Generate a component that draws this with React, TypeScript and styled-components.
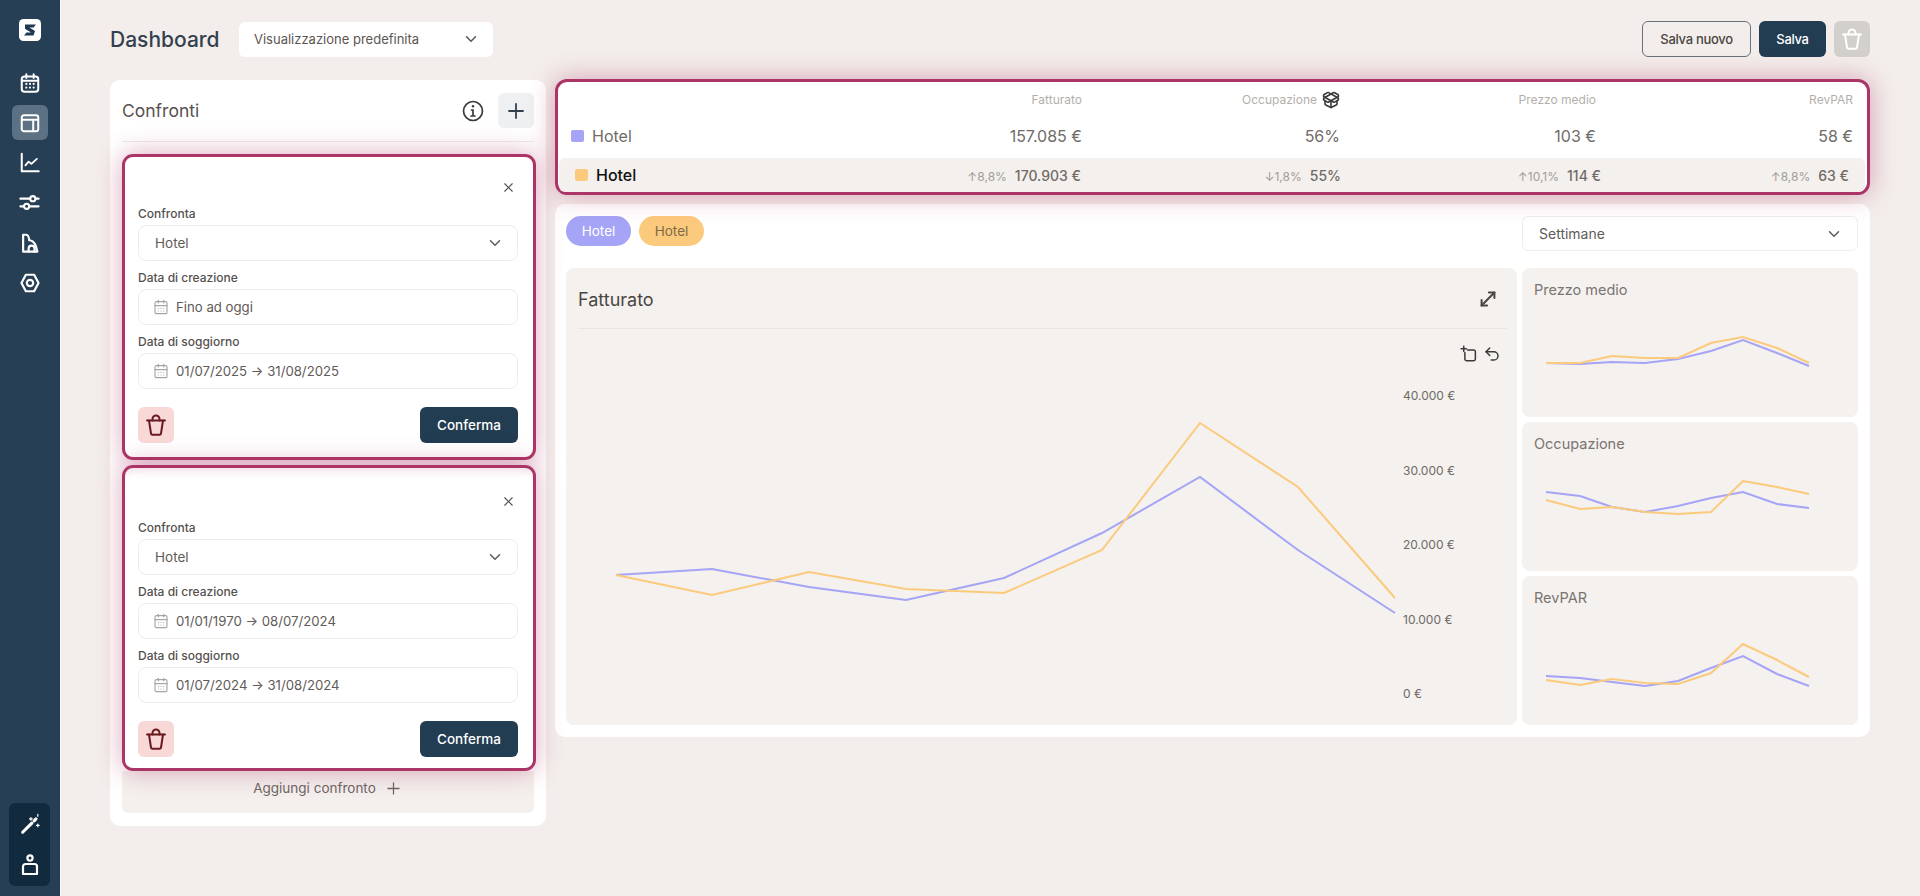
import React from "react"
import styled, { createGlobalStyle } from "styled-components"
import { CalendarDays, ChevronDown, MoveDiagonal, PackageOpen, Plus, Undo2, X } from "lucide-react"

const PURPLE = "#a5a4f6"
const YELLOW = "#fcca7d"
const NAVY = "#223c52"

const GlobalStyle = createGlobalStyle`
    html, body {
        margin: 0;
        height: 100%;
        background: #f3eeeb;
        font-family: Inter, "Liberation Sans", sans-serif;
        color: #4a4643;
    }
    * { box-sizing: border-box; }
`

/* ---------- icons ---------- */

const NavCalendar = () => (
    <svg width="22" height="22" viewBox="0 0 24 24" fill="none" stroke="currentColor" strokeWidth="2.2" strokeLinecap="round">
        <rect x="3" y="5" width="18" height="16.5" rx="3" />
        <path d="M8 2.5v4M16 2.5v4M3.5 9.5h17" />
        <path d="M8 13h.01M12 13h.01M16 13h.01M8 17h.01M12 17h.01M16 17h.01" strokeWidth="2.4" />
    </svg>
)

const NavLayout = () => (
    <svg width="22" height="22" viewBox="0 0 24 24" fill="none" stroke="currentColor" strokeWidth="2.2" strokeLinejoin="round">
        <rect x="3" y="3.5" width="18" height="17.5" rx="2.5" />
        <path d="M3 8.5h18M15.5 8.5V21" />
    </svg>
)

const NavChart = () => (
    <svg width="22" height="22" viewBox="0 0 24 24" fill="none" stroke="currentColor" strokeWidth="2.2" strokeLinecap="round" strokeLinejoin="round">
        <path d="M3 2v19h18.5" />
        <path d="M7 14.5l3.5-4 3 2.5 6-5.5" strokeWidth="2" />
    </svg>
)

const NavSliders = () => (
    <svg width="23" height="23" viewBox="0 0 24 24" fill="none" stroke="currentColor" strokeWidth="2.2" strokeLinecap="round">
        <path d="M2.5 8h10M18.5 8h3M2.5 16h3.5M12 16h9.5" />
        <circle cx="15.5" cy="8" r="2.7" />
        <circle cx="9" cy="16" r="2.7" />
    </svg>
)

const NavBuilding = () => (
    <svg width="22" height="22" viewBox="0 0 24 24" fill="none" stroke="currentColor" strokeWidth="2.4" strokeLinecap="round" strokeLinejoin="round">
        <path d="M4.5 21.5V3H8c2.2 0 2.8 3 3.2 6 3.3.2 5 2 6.3 4.5 1.2 2.4 2 5 2.5 8z" />
        <path d="M10.5 21.5V18a3.2 3.2 0 0 1 6.4 0v3.5" />
    </svg>
)

const NavGear = () => (
    <svg width="22" height="22" viewBox="0 0 24 24" fill="none" stroke="currentColor" strokeWidth="2.4" strokeLinejoin="round">
        <path d="M7.5 3h9l4.8 9-4.8 9h-9L2.700 12z" />
        <circle cx="12" cy="12" r="3.5" />
    </svg>
)

const NavWand = () => (
    <svg width="22" height="22" viewBox="0 0 24 24" fill="none" stroke="currentColor" strokeLinecap="round">
        <path d="M4 21L14 11" strokeWidth="3.4" />
        <path d="M16.5 8.5L18.5 6.5" strokeWidth="3.4" />
        <path d="M13 5v3M11.5 6.5h3M20.5 12v3M19 13.5h3M20.5 1.5v2" strokeWidth="1.3" />
    </svg>
)

const NavUser = () => (
    <svg width="24" height="24" viewBox="0 0 24 24" fill="none" stroke="currentColor" strokeWidth="2.2" strokeLinejoin="round">
        <circle cx="12" cy="5" r="2.6" />
        <path d="M7.5 11h9a2.5 2.5 0 0 1 2.5 2.5V21H5v-7.5A2.5 2.5 0 0 1 7.5 11z" />
    </svg>
)

const InfoIcon = () => (
    <svg width="24" height="24" viewBox="0 0 24 24" fill="none" stroke="#3c3a38" strokeWidth="1.7" strokeLinecap="round">
        <circle cx="12" cy="12" r="9.5" />
        <path d="M10.5 11H12v6M10 17h4" />
        <path d="M12 7.3h.01" strokeWidth="2.4" />
    </svg>
)

const TrashIcon = ({ size = 24 }: { size?: number }) => (
    <svg width={size} height={size} viewBox="0 0 24 24" fill="none" stroke="currentColor" strokeWidth="2" strokeLinecap="round" strokeLinejoin="round">
        <path d="M3 7.5h18" />
        <path d="M8.5 7.5V6a3.5 3.5 0 0 1 7 0v1.5" />
        <path d="M5 7.5l2 13a1.5 1.5 0 0 0 1.5 1.300h7a1.500 1.500 0 0 0 1.500-1.300l2-13" />
    </svg>
)

const CropIcon = () => (
    <svg width="18" height="18" viewBox="0 0 24 24" fill="none" stroke="currentColor" strokeWidth="2" strokeLinecap="round" strokeLinejoin="round">
        <path d="M10 6.5h8a2.5 2.5 0 0 1 2.5 2.5v9.500a2.500 2.500 0 0 1-2.500 2.500H9a2.500 2.500 0 0 1-2.500-2.500V10" />
        <path d="M5 1.5v7M1.5 5h7" />
    </svg>
)

const LogoMark = () => (
    <svg width="22" height="22" viewBox="0 0 22 22">
        <rect width="22" height="22" rx="4.5" fill="#ffffff" />
        <path d="M6 5.5h11l-2.500 3H10.500l5.500 3.500-1.500 4.500H5l2.500-3h4.500L6 9.800z" fill="#1e3a52" />
    </svg>
)

/* ---------- chart data, read from the picture ---------- */

const BIG_X = [50, 146, 243, 340, 438, 536, 634, 732, 829]
const BIG_PURPLE = [189, 183, 201, 214, 192, 147, 91, 164, 227]
const BIG_YELLOW = [189, 209, 186, 203, 207, 164, 37, 101, 212]

const MINI_X = [24, 58, 90, 123, 156, 189, 221, 255, 287]

const miniCharts = [
    {
        title: "Prezzo medio",
        purple: [63, 64, 62, 63, 59, 51, 40, 53, 66],
        yellow: [63, 63, 56, 58, 58, 43, 37, 48, 63],
    },
    {
        title: "Occupazione",
        purple: [38, 42, 53, 58, 52, 44, 38, 50, 54],
        yellow: [46, 55, 53, 58, 60, 58, 27, 33, 40],
    },
    {
        title: "RevPAR",
        purple: [68, 70, 74, 78, 73, 60, 48, 66, 78],
        yellow: [72, 77, 71, 75, 76, 65, 36, 52, 69],
    },
]

const toPoints = (xs: number[], ys: number[]) => xs.map((x, i) => `${x},${ys[i]}`).join(" ")

const statsRows = [
    { label: "Fatturato", value: "157.085 €", delta: "↑8,8%", other: "170.903 €" },
    { label: "Occupazione", value: "56%", delta: "↓1,8%", other: "55%" },
    { label: "Prezzo medio", value: "103 €", delta: "↑10,1%", other: "114 €" },
    { label: "RevPAR", value: "58 €", delta: "↑8,8%", other: "63 €" },
]

const comparisons = [
    { top: 22, bottom: 14, overlapped: false, creation: "Fino ad oggi", stay: "01/07/2025 → 31/08/2025" },
    { top: 25, bottom: 11, overlapped: true, creation: "01/01/1970 → 08/07/2024", stay: "01/07/2024 → 31/08/2024" },
]

/* ---------- page ---------- */

export default function App() {
    return (
        <Page>
            <GlobalStyle />
            <Sidebar>
                <LogoMark />
                <NavList>
                    <NavItem><NavCalendar /></NavItem>
                    <NavItem $active><NavLayout /></NavItem>
                    <NavItem><NavChart /></NavItem>
                    <NavItem><NavSliders /></NavItem>
                    <NavItem><NavBuilding /></NavItem>
                    <NavItem><NavGear /></NavItem>
                </NavList>
                <BottomTile>
                    <NavWand />
                    <NavUser />
                </BottomTile>
            </Sidebar>

            <Main>
                <TopBar>
                    <PageTitle>Dashboard</PageTitle>
                    <ViewSelect>
                        Visualizzazione predefinita
                        <ChevronDown size={18} strokeWidth={2} />
                    </ViewSelect>
                    <TopActions>
                        <OutlineButton>Salva nuovo</OutlineButton>
                        <SaveButton>Salva</SaveButton>
                        <DisabledTrash><TrashIcon size={24} /></DisabledTrash>
                    </TopActions>
                </TopBar>

                <Columns>
                    <ComparePanel>
                        <CompareHeader>
                            <CompareTitle>Confronti</CompareTitle>
                            <InfoIcon />
                            <AddButton><Plus size={24} strokeWidth={1.8} /></AddButton>
                        </CompareHeader>
                        <CompareList>
                            {comparisons.map(item => (
                                <CompareCard key={item.stay} $top={item.top} $bottom={item.bottom} $overlapped={item.overlapped}>
                                    <CloseRow><X size={15} strokeWidth={1.8} /></CloseRow>
                                    <FieldLabel>Confronta</FieldLabel>
                                    <SelectBox>
                                        Hotel
                                        <ChevronDown size={18} strokeWidth={2} />
                                    </SelectBox>
                                    <FieldLabel $spaced>Data di creazione</FieldLabel>
                                    <DateBox>
                                        <CalendarDays size={16} strokeWidth={1.7} color="#a3a6a8" />
                                        {item.creation}
                                    </DateBox>
                                    <FieldLabel $spaced>Data di soggiorno</FieldLabel>
                                    <DateBox>
                                        <CalendarDays size={16} strokeWidth={1.7} color="#a3a6a8" />
                                        {item.stay}
                                    </DateBox>
                                    <CardActions>
                                        <DangerButton><TrashIcon /></DangerButton>
                                        <ConfirmButton>Conferma</ConfirmButton>
                                    </CardActions>
                                </CompareCard>
                            ))}
                            <AddRow>
                                Aggiungi confronto
                                <Plus size={19} strokeWidth={1.6} />
                            </AddRow>
                        </CompareList>
                    </ComparePanel>

                    <RightColumn>
                        <StatsCard>
                            <StatsGrid $height={35}>
                                <span />
                                {statsRows.map(stat => (
                                    <StatHead key={stat.label}>
                                        {stat.label}
                                        {stat.label === "Occupazione" && <PackageOpen size={18} strokeWidth={2.2} color="#3c3a38" />}
                                    </StatHead>
                                ))}
                            </StatsGrid>
                            <StatsGrid $height={38}>
                                <RowName>
                                    <Swatch $color={PURPLE} />
                                    Hotel
                                </RowName>
                                {statsRows.map(stat => <StatValue key={stat.label}>{stat.value}</StatValue>)}
                            </StatsGrid>
                            <CompareRow>
                                <RowName $strong>
                                    <Swatch $color={YELLOW} />
                                    Hotel
                                </RowName>
                                {statsRows.map(stat => (
                                    <DeltaCell key={stat.label}>
                                        <Delta>{stat.delta}</Delta>
                                        <DeltaValue>{stat.other}</DeltaValue>
                                    </DeltaCell>
                                ))}
                            </CompareRow>
                        </StatsCard>

                        <ChartsCard>
                            <ChartsToolbar>
                                <Pill $color={PURPLE} $text="#ffffff">Hotel</Pill>
                                <Pill $color={YELLOW} $text="#7d6a48">Hotel</Pill>
                                <PeriodSelect>
                                    Settimane
                                    <ChevronDown size={18} strokeWidth={2} />
                                </PeriodSelect>
                            </ChartsToolbar>
                            <ChartsGrid>
                                <BigChart>
                                    <BigChartHeader>
                                        <BigChartTitle>Fatturato</BigChartTitle>
                                        <MoveDiagonal size={22} strokeWidth={2.2} color="#4a4643" />
                                    </BigChartHeader>
                                    <ChartTools>
                                        <CropIcon />
                                        <Undo2 size={18} strokeWidth={2} />
                                    </ChartTools>
                                    <PlotRow>
                                        <svg width="834" height="318" viewBox="0 0 834 318" fill="none" strokeWidth="2">
                                            <polyline points={toPoints(BIG_X, BIG_PURPLE)} stroke={PURPLE} />
                                            <polyline points={toPoints(BIG_X, BIG_YELLOW)} stroke={YELLOW} />
                                        </svg>
                                        <Axis>
                                            {["40.000 €", "30.000 €", "20.000 €", "10.000 €", "0 €"].map(tick => (
                                                <AxisTick key={tick}>{tick}</AxisTick>
                                            ))}
                                        </Axis>
                                    </PlotRow>
                                </BigChart>
                                <MiniColumn>
                                    {miniCharts.map(chart => (
                                        <MiniChart key={chart.title}>
                                            <MiniTitle>{chart.title}</MiniTitle>
                                            <svg width="336" height="117" viewBox="0 0 336 117" fill="none" strokeWidth="2">
                                                <polyline points={toPoints(MINI_X, chart.purple)} stroke={PURPLE} />
                                                <polyline points={toPoints(MINI_X, chart.yellow)} stroke={YELLOW} />
                                            </svg>
                                        </MiniChart>
                                    ))}
                                </MiniColumn>
                            </ChartsGrid>
                        </ChartsCard>
                    </RightColumn>
                </Columns>
            </Main>
        </Page>
    )
}

const Page = styled.div`
    display: flex;
    height: 896px;
    overflow: hidden;
`

const Sidebar = styled.aside`
    display: flex;
    flex-direction: column;
    align-items: center;
    flex: none;
    width: 61px;
    padding: 19px 1px 10px 0;
    background: #263f55;
    border-right: 1px solid #f9f7f5;
    color: #ffffff;
`

const NavList = styled.nav`
    display: flex;
    flex-direction: column;
    gap: 5px;
    margin-top: 24px;
`

const NavItem = styled.div<{ $active?: boolean }>`
    display: flex;
    align-items: center;
    justify-content: center;
    width: 36px;
    height: 35px;
    border-radius: 6px;
    background: ${props => (props.$active ? "#5c7183" : "transparent")};
`

const BottomTile = styled.div`
    display: flex;
    flex-direction: column;
    align-items: center;
    gap: 18px;
    width: 41px;
    height: 83px;
    margin-top: auto;
    padding-top: 10px;
    border-radius: 6px;
    background: #112a3e;
`

const Main = styled.main`
    flex: 1;
    min-width: 0;
    padding: 21px 50px 0 49px;
`

const TopBar = styled.header`
    display: flex;
    align-items: center;
    height: 36px;
    margin-bottom: 22px;
`

const PageTitle = styled.h1`
    width: 129px;
    margin: 0;
    font-size: 21px;
    font-weight: 500;
    color: #33414e;
    white-space: nowrap;
`

const ViewSelect = styled.div`
    display: flex;
    align-items: center;
    justify-content: space-between;
    width: 254px;
    height: 35px;
    padding: 0 13px 0 15px;
    border-radius: 6px;
    background: #ffffff;
    font-size: 13px;
    color: #5a5652;
`

const TopActions = styled.div`
    display: flex;
    gap: 8px;
    margin-left: auto;
`

const OutlineButton = styled.button`
    width: 109px;
    height: 36px;
    padding: 0;
    border: 1.5px solid #66727c;
    border-radius: 6px;
    background: transparent;
    font: 500 13px Inter, sans-serif;
    letter-spacing: -0.3px;
    color: #4a4643;
`

const SaveButton = styled.button`
    width: 67px;
    height: 36px;
    padding: 0;
    border: 0;
    border-radius: 6px;
    background: ${NAVY};
    font: 500 13px Inter, sans-serif;
    letter-spacing: -0.3px;
    color: #ffffff;
`

const DisabledTrash = styled.div`
    display: flex;
    align-items: center;
    justify-content: center;
    width: 36px;
    height: 36px;
    border-radius: 6px;
    background: #d3d0cc;
    color: #ffffff;
`

const Columns = styled.div`
    display: flex;
    align-items: flex-start;
    gap: 9px;
`

const ComparePanel = styled.section`
    flex: none;
    width: 436px;
    margin-top: 1px;
    padding: 13px 12px;
    border-radius: 10px;
    background: #ffffff;
`

const CompareHeader = styled.div`
    display: flex;
    align-items: center;
    gap: 13px;
    padding-bottom: 13px;
    border-bottom: 1px solid #efebe8;
`

const CompareTitle = styled.h2`
    flex: 1;
    margin: 0;
    font-size: 17.5px;
    font-weight: 400;
    color: #56524f;
`

const AddButton = styled.div`
    display: flex;
    align-items: center;
    justify-content: center;
    width: 36px;
    height: 35px;
    border-radius: 6px;
    background: #eef0f2;
    color: #33414e;
`

const CompareList = styled.div`
    display: flex;
    flex-direction: column;
    gap: 5px;
    padding-top: 12px;
`

const CompareCard = styled.article<{ $top: number; $bottom: number; $overlapped: boolean }>`
    position: relative;
    width: 414px;
    height: 306px;
    padding: ${props => props.$top}px 15px ${props => props.$bottom}px 13px;
    border: 3px solid #ab3566;
    border-radius: 11px;
    background: #ffffff;
    box-shadow: 0 0 26px rgba(172, 50, 100, 0.42)
        ${props => (props.$overlapped ? ", inset 0 10px 9px -7px rgba(172, 50, 100, 0.16)" : "")};
`

const CloseRow = styled.div`
    display: flex;
    justify-content: flex-end;
    align-items: center;
    height: 16px;
    margin-bottom: 10px;
    padding-right: 2px;
    color: #55514e;
`

const FieldLabel = styled.label<{ $spaced?: boolean }>`
    display: block;
    height: 16px;
    margin-top: ${props => (props.$spaced ? "8px" : "0")};
    margin-bottom: 4px;
    font-size: 12px;
    font-weight: 500;
    line-height: 18px;
    color: #55514e;
`

const SelectBox = styled.div`
    display: flex;
    align-items: center;
    justify-content: space-between;
    height: 36px;
    padding: 0 13px 0 16px;
    border: 1.5px solid #efedea;
    border-radius: 8px;
    font-size: 13.5px;
    color: #5f5b58;
`

const DateBox = styled.div`
    display: flex;
    align-items: center;
    gap: 7px;
    height: 36px;
    padding-left: 14px;
    border: 1.5px solid #efedea;
    border-radius: 8px;
    font-size: 13.2px;
    color: #5f5b58;
`

const CardActions = styled.div`
    display: flex;
    justify-content: space-between;
    margin-top: 18px;
`

const DangerButton = styled.div`
    display: flex;
    align-items: center;
    justify-content: center;
    width: 36px;
    height: 36px;
    border-radius: 6px;
    background: #f9d9d7;
    color: #6b1a1f;
`

const ConfirmButton = styled.button`
    width: 98px;
    height: 36px;
    padding: 0;
    border: 0;
    border-radius: 6px;
    background: ${NAVY};
    font: 500 13.5px Inter, sans-serif;
    color: #ffffff;
`

const AddRow = styled.div`
    display: flex;
    align-items: center;
    justify-content: center;
    gap: 8px;
    height: 42px;
    margin-top: -5px;
    padding-bottom: 8px;
    border-radius: 0 0 6px 6px;
    background: #f4f0ed;
    font-size: 13.5px;
    color: #6b6663;
`

const RightColumn = styled.div`
    flex: 1;
    min-width: 0;
    display: flex;
    flex-direction: column;
    gap: 9px;
`

const StatsCard = styled.section`
    position: relative;
    z-index: 1;
    height: 116px;
    padding: 0 2px 0 1px;
    border: 3px solid #ab3566;
    border-radius: 12px;
    background: #ffffff;
    box-shadow: 0 0 26px rgba(172, 50, 100, 0.42);
`

const StatsGrid = styled.div<{ $height: number }>`
    display: grid;
    grid-template-columns: 1fr 260px 258px 256px 257px;
    align-items: center;
    height: ${props => props.$height}px;
    padding: 0 12px;
`

const StatHead = styled.span`
    display: flex;
    justify-content: flex-end;
    align-items: center;
    gap: 5px;
    font-size: 12px;
    color: #b3afab;
`

const RowName = styled.span<{ $strong?: boolean }>`
    display: flex;
    align-items: center;
    gap: 8px;
    font-size: 16px;
    font-weight: ${props => (props.$strong ? 500 : 400)};
    color: ${props => (props.$strong ? "#111111" : "#706b67")};
`

const Swatch = styled.i<{ $color: string }>`
    width: 13px;
    height: 12px;
    border-radius: 2px;
    background: ${props => props.$color};
`

const StatValue = styled.span`
    text-align: right;
    font-size: 16px;
    color: #706b67;
`

const CompareRow = styled.div`
    display: grid;
    grid-template-columns: 1fr 260px 260px 260px 248px;
    align-items: center;
    height: 34px;
    margin-top: 3px;
    padding: 0 16px;
    border-radius: 6px;
    background: #f4f0ed;
`

const DeltaCell = styled.span`
    display: flex;
    justify-content: flex-end;
    align-items: baseline;
    gap: 8px;
`

const Delta = styled.span`
    font-size: 12px;
    color: #a09c98;
`

const DeltaValue = styled.span`
    font-size: 14px;
    font-weight: 500;
    color: #706b67;
`

const ChartsCard = styled.section`
    padding: 12px 12px 12px 11px;
    border-radius: 10px;
    background: #ffffff;
`

const ChartsToolbar = styled.div`
    display: flex;
    align-items: flex-start;
    gap: 8px;
    height: 35px;
    margin-bottom: 17px;
`

const Pill = styled.span<{ $color: string; $text: string }>`
    display: flex;
    align-items: center;
    justify-content: center;
    width: 65px;
    height: 30px;
    border-radius: 15px;
    background: ${props => props.$color};
    font-size: 13.5px;
    color: ${props => props.$text};
`

const PeriodSelect = styled.div`
    display: flex;
    align-items: center;
    justify-content: space-between;
    width: 336px;
    height: 35px;
    margin-left: auto;
    padding: 0 14px 0 16px;
    border: 1.5px solid #efedea;
    border-radius: 6px;
    font-size: 14px;
    color: #5f5b58;
`

const ChartsGrid = styled.div`
    display: grid;
    grid-template-columns: 951px 336px;
    gap: 5px;
    height: 457px;
`

const BigChart = styled.div`
    border-radius: 8px;
    background: #f4f1ee;
`

const BigChartHeader = styled.div`
    display: flex;
    align-items: center;
    justify-content: space-between;
    height: 61px;
    margin: 0 10px 0 12px;
    padding: 2px 8px 0 0;
    border-bottom: 1px solid #e9e5e2;
`

const BigChartTitle = styled.h3`
    margin: 0;
    font-size: 18px;
    font-weight: 400;
    color: #4a4643;
`

const ChartTools = styled.div`
    display: flex;
    justify-content: flex-end;
    gap: 5px;
    height: 18px;
    margin-top: 16px;
    padding-right: 16px;
    color: #3c3a38;
`

const PlotRow = styled.div`
    display: flex;
    height: 318px;
    margin-top: 23px;

    svg { flex: none; }
`

const Axis = styled.div`
    display: flex;
    flex-direction: column;
    justify-content: space-between;
    padding-left: 3px;
`

const AxisTick = styled.span`
    font-size: 12px;
    line-height: 20px;
    color: #6f6a66;
`

const MiniColumn = styled.div`
    display: flex;
    flex-direction: column;
    gap: 5px;
`

const MiniChart = styled.div`
    height: 149px;
    padding-top: 12px;
    border-radius: 8px;
    background: #f4f1ee;

    svg { display: block; }
`

const MiniTitle = styled.h4`
    margin: 0 0 0 12px;
    font-size: 14.5px;
    font-weight: 400;
    line-height: 20px;
    color: #7a7571;
`
